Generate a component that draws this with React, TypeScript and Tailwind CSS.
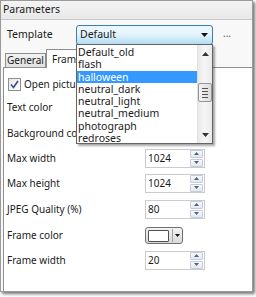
import React from "react";

const font = "font-['Noto_Sans',sans-serif]";

function Spin({ value }: { value: string }) {
  return (
    <div className="ml-auto mr-[47px] flex h-[19px] w-[60px] items-center border border-[#c9cbd0] bg-white">
      <span className="ml-[2px] flex-1 text-[10px] text-[#1a1a1a]">{value}</span>
      <div className="mr-[1px] flex h-[17px] w-[13px] flex-col gap-[1px]">
        <div className="flex h-[8px] items-center justify-center rounded-[1px] border border-[#c5ccd8] bg-gradient-to-b from-[#f7f9fc] to-[#e3e9f1]">
          <svg width="5" height="3" viewBox="0 0 5 3"><path d="M0 3 L2.5 0 L5 3 Z" fill="#4d6185" /></svg>
        </div>
        <div className="flex h-[8px] items-center justify-center rounded-[1px] border border-[#c5ccd8] bg-gradient-to-b from-[#f7f9fc] to-[#e3e9f1]">
          <svg width="5" height="3" viewBox="0 0 5 3"><path d="M0 0 L2.5 3 L5 0 Z" fill="#4d6185" /></svg>
        </div>
      </div>
    </div>
  );
}

function Row({ label, h, children }: { label: string; h: string; children?: React.ReactNode }) {
  return (
    <div className={`flex items-center ${h}`}>
      <span className="pl-[3px] text-[10px] text-[#1a1a1a] whitespace-nowrap">{label}</span>
      {children}
    </div>
  );
}

export default function App() {
  const items = [
    "Default_old",
    "flash",
    "halloween",
    "neutral_dark",
    "neutral_light",
    "neutral_medium",
    "photograph",
    "redroses",
  ];
  return (
    <div className={`relative h-[297px] w-[256px] bg-white ${font}`}>
      <div className="relative flex h-[292px] w-[253px] flex-col border border-[#9a9a9a] bg-[#f8f8f8] shadow-[2px_2px_3px_rgba(0,0,0,0.55)]">
        {/* header */}
        <div className="flex h-[19px] items-center border-b border-[#c8c8c8] bg-gradient-to-b from-[#f4f4f4] to-[#e8e8e8] pl-[2px] text-[10.5px] text-[#1a1a1a]">
          Parameters
        </div>
        {/* template row */}
        <div className="flex h-[29px] items-center">
          <span className="w-[75px] pl-[6px] text-[10.5px] text-[#1a1a1a]">Template</span>
          <div className="flex h-[20px] w-[137px] items-center rounded-[3px] border border-[#3c7fb1] bg-gradient-to-b from-[#eaf6fd] from-40% to-[#b3dcf3] pl-[3px] text-[10.5px] text-[#1a1a1a]">
            <span className="flex-1">Default</span>
            <svg className="mr-[4px]" width="7" height="4" viewBox="0 0 7 4"><path d="M0 0 L7 0 L3.5 4 Z" fill="#111" /></svg>
          </div>
          <span className="ml-[10px] pb-[4px] text-[10px] leading-none text-[#556]">...</span>
        </div>
        {/* tabs */}
        <div className="flex h-[18px] items-end pl-[4px]">
          <div className="flex h-[14px] w-[41px] items-center justify-center border border-b-0 border-[#8e8f8f] bg-gradient-to-b from-[#f2f2f2] to-[#e1e1e1] text-[10px] text-[#1a1a1a]">
            General
          </div>
          <div className="relative -mb-[1px] flex h-[19px] w-[44px] items-center border border-b-0 border-[#8e8f8f] bg-white pl-[5px] text-[10px] text-[#1a1a1a]">
            Frame
          </div>
        </div>
        {/* tab pane */}
        <div className="ml-[2px] flex flex-1 flex-col border-l border-t border-[#8e8f8f] bg-white pt-[5px]">
          <div className="flex h-[22px] items-center pl-[4px]">
            <div className="flex h-[13px] w-[13px] shrink-0 items-center justify-center border border-[#8f8f8f] bg-gradient-to-br from-[#e6e6e6] to-[#ffffff]">
              <svg width="9" height="9" viewBox="0 0 9 9"><path d="M1 4.5 L3.5 7.5 L8 1" fill="none" stroke="#3a4f8a" strokeWidth="1.6" /></svg>
            </div>
            <span className="ml-[3px] text-[10px] text-[#1a1a1a] whitespace-nowrap">Open pictures after export</span>
          </div>
          <Row label="Text color" h="h-[25px]" />
          <Row label="Background color" h="h-[26px]" />
          <Row label="Max width" h="h-[24px]"><Spin value="1024" /></Row>
          <Row label="Max height" h="h-[26px]"><Spin value="1024" /></Row>
          <Row label="JPEG Quality (%)" h="h-[26px]"><Spin value="80" /></Row>
          <Row label="Frame color" h="h-[27px]">
            <div className="ml-auto mr-[69px] flex h-[17px] w-[38px] items-center rounded-[3px] border border-[#707070] bg-gradient-to-b from-[#f3f3f3] to-[#d9d9d9]">
              <div className="ml-[2px] h-[12px] w-[21px] rounded-[1px] border border-[#505050] bg-white" />
              <div className="ml-[3px] h-[13px] w-[1px] bg-[#a0a0a0]" />
              <svg className="ml-[2px]" width="5" height="3" viewBox="0 0 5 3"><path d="M0 0 L5 0 L2.5 3 Z" fill="#111" /></svg>
            </div>
          </Row>
          <Row label="Frame width" h="h-[22px]"><Spin value="20" /></Row>
        </div>

        {/* dropdown list overlay */}
        <div className="absolute left-[75px] top-[43px] flex h-[100px] w-[137px] border border-[#646464] bg-white shadow-[2px_2px_2px_rgba(0,0,0,0.35)]">
          <div className="flex flex-1 flex-col pt-[1px]">
            {items.map((it) => (
              <div
                key={it}
                className={`h-[12.3px] pl-[1px] text-[10.5px] leading-[12.3px] ${
                  it === "halloween" ? "bg-[#3399ff] text-white" : "text-[#1a1a1a]"
                }`}
              >
                {it}
              </div>
            ))}
          </div>
          <div className="flex w-[15px] flex-col items-center border-l border-[#e0e0e0] bg-gradient-to-r from-[#e9e9e9] via-[#f6f6f6] to-[#e9e9e9]">
            <div className="flex h-[17px] items-center justify-center">
              <svg width="7" height="4" viewBox="0 0 7 4"><path d="M0 4 L3.5 0 L7 4 Z" fill="#333" /></svg>
            </div>
            <div className="mt-[21px] flex h-[19px] w-[14px] flex-col items-center justify-center gap-[2px] rounded-[2px] border border-[#969696] bg-gradient-to-r from-[#f4f4f4] to-[#dcdcdc]">
              <div className="h-[1px] w-[6px] bg-[#555]" />
              <div className="h-[1px] w-[6px] bg-[#555]" />
              <div className="h-[1px] w-[6px] bg-[#555]" />
              <div className="h-[1px] w-[6px] bg-[#555]" />
            </div>
            <div className="mt-auto flex h-[17px] items-center justify-center">
              <svg width="7" height="4" viewBox="0 0 7 4"><path d="M0 0 L7 0 L3.5 4 Z" fill="#333" /></svg>
            </div>
          </div>
        </div>
      </div>
    </div>
  );
}
